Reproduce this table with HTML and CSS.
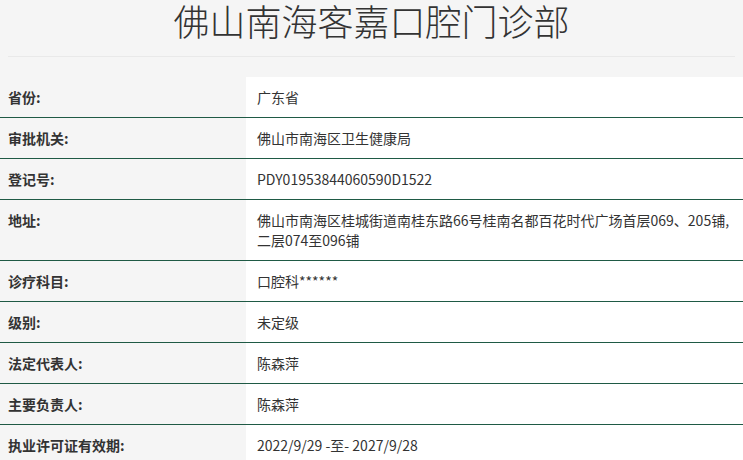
FILE: index.html
```html
<!DOCTYPE html>
<html lang="zh-CN">
<head>
<meta charset="utf-8">
<title>佛山南海客嘉口腔门诊部</title>
<link rel="stylesheet" href="styles.css">
</head>
<body>
<header class="head">
  <h1 class="title">佛山南海客嘉口腔门诊部</h1>
  <div class="divider"></div>
</header>
<div class="info">
  <div class="row"><div class="label">省份:</div><div class="value">广东省</div></div>
  <div class="row"><div class="label">审批机关:</div><div class="value">佛山市南海区卫生健康局</div></div>
  <div class="row"><div class="label">登记号:</div><div class="value">PDY01953844060590D1522</div></div>
  <div class="row"><div class="label">地址:</div><div class="value">佛山市南海区桂城街道南桂东路66号桂南名都百花时代广场首层069、205铺,二层074至096铺</div></div>
  <div class="row"><div class="label">诊疗科目:</div><div class="value">口腔科******</div></div>
  <div class="row"><div class="label">级别:</div><div class="value">未定级</div></div>
  <div class="row"><div class="label">法定代表人:</div><div class="value">陈森萍</div></div>
  <div class="row"><div class="label">主要负责人:</div><div class="value">陈森萍</div></div>
  <div class="row"><div class="label">执业许可证有效期:</div><div class="value">2022/9/29 -至- 2027/9/28</div></div>
</div>
</body>
</html>
```
FILE: styles.css
```css
html, body {
  margin: 0;
  padding: 0;
  background: #f5f5f5;
  font-family: "Noto Sans CJK SC", "Noto Sans", sans-serif;
  color: #333;
}
.head {
  padding: 0 8px;
}
.title {
  margin: 0;
  font-size: 36px;
  line-height: 40px;
  font-weight: 300;
  text-align: center;
  color: #333;
}
.divider {
  margin-top: 16px;
  height: 1px;
  background: #e9e9e9;
}
.info {
  margin-top: 20px;
}
.row {
  display: grid;
  grid-template-columns: 246px 1fr;
  border-bottom: 1px solid #1f5a45;
}
.label {
  padding: 10px 8px;
  font-size: 14px;
  line-height: 20px;
  font-weight: bold;
  color: #333;
}
.value {
  background: #fff;
  padding: 10px 8px 10px 11px;
  font-size: 14px;
  line-height: 20px;
  color: #333;
}
```
